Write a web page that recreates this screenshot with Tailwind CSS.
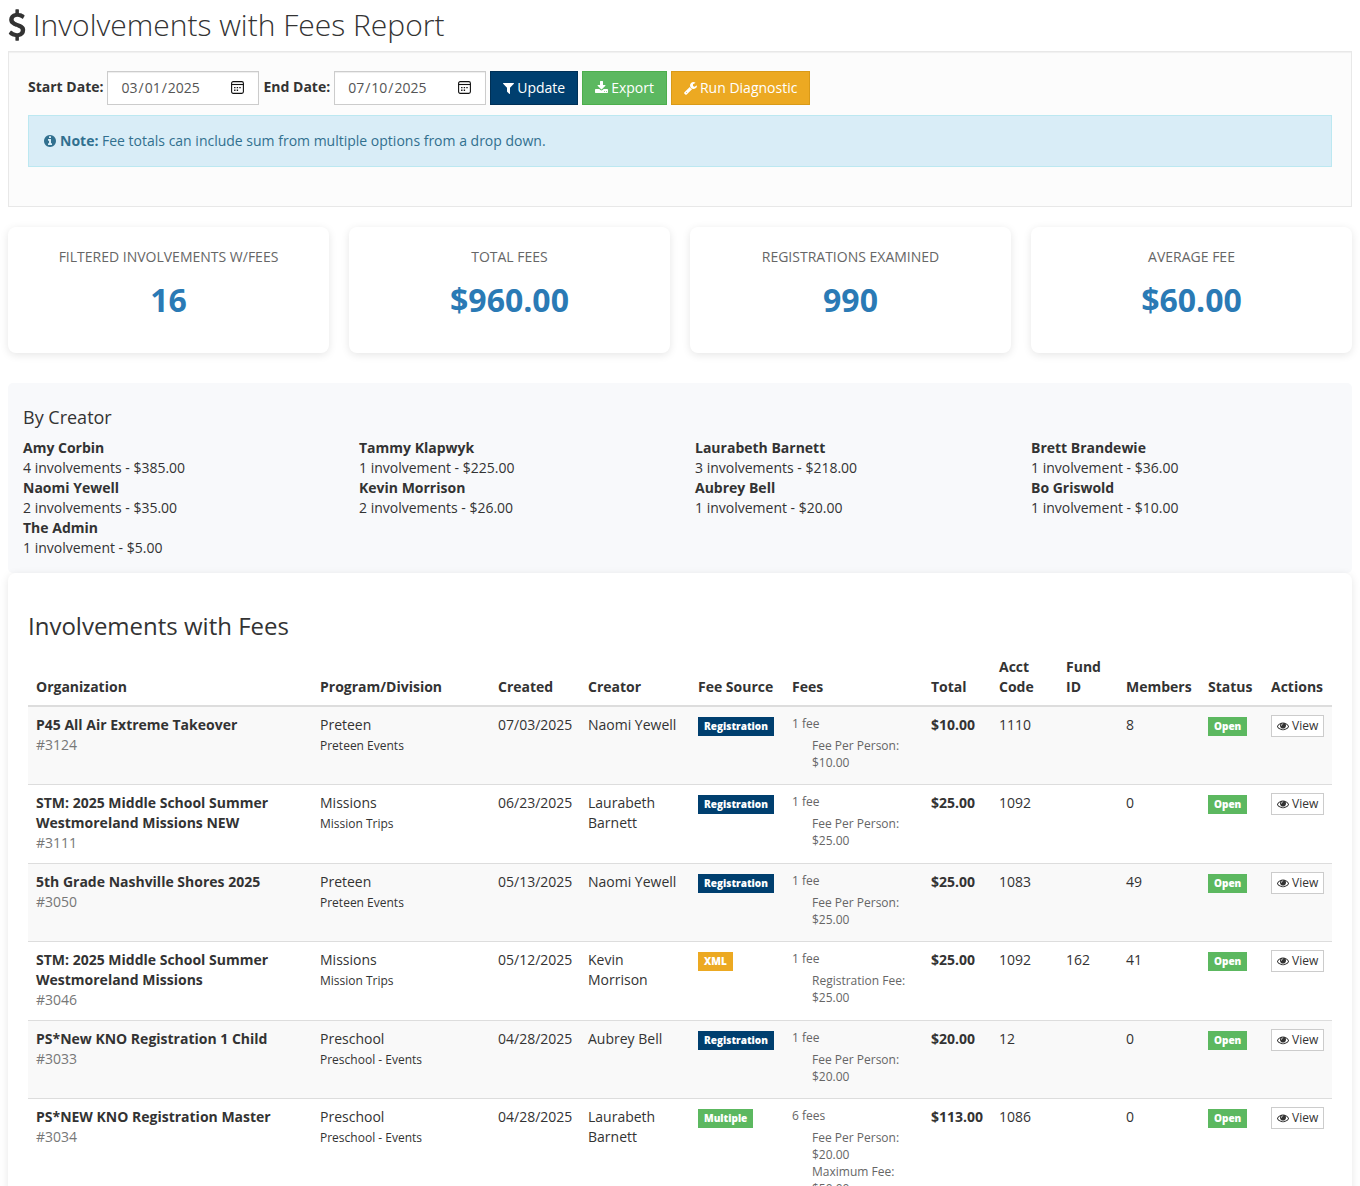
<!DOCTYPE html>
<html lang="en">
<head>
<meta charset="utf-8">
<meta name="viewport" content="width=device-width, initial-scale=1">
<title>Involvements with Fees Report</title>
<script src="https://cdn.jsdelivr.net/npm/@tailwindcss/browser@4"></script>
</head>
<body class="bg-white px-2 font-['Open_Sans',sans-serif] text-sm leading-5 text-[#333]">
<svg class="hidden" aria-hidden="true">
  <symbol id="eye" viewBox="0 0 1792 1792"><path d="M1664 960q-152-236-381-353 61 104 61 225 0 185-131.5 316.5t-316.5 131.5-316.5-131.5-131.5-316.5q0-121 61-225-229 117-381 353 133 205 333.5 326.5t434.5 121.5 434.5-121.5 333.5-326.5zm-720-384q0-20-14-34t-34-14q-125 0-214.5 89.5t-89.5 214.5q0 20 14 34t34 14 34-14 14-34q0-86 61-147t147-61q20 0 34-14t14-34zm848 384q0 34-20 69-140 230-376.5 368.5t-499.5 138.5-499.5-139-376.5-368q-20-35-20-69t20-69q140-229 376.5-368t499.5-139 499.5 139 376.5 368q20 35 20 69z"/></symbol>
  <symbol id="calendar" viewBox="0 0 13 13"><rect x=".6" y=".6" width="11.8" height="11.8" rx="1.6" fill="none" stroke="#111" stroke-width="1.1"/><path d="M.6 3.5h11.8" stroke="#111" stroke-width="1.1"/><path d="M5.7 6h1.4v1.3H5.7zM8.3 6h1.4v1.3H8.3zM3.1 6h1.4v1.3H3.1zM3.1 8.6h1.4v1.3H3.1zM5.7 8.6h1.4v1.3H5.7z" fill="#111"/></symbol>
</svg>

<h1 class="flex items-center gap-[7px] pt-[7px] pb-[9px] text-[30px] leading-[35px] font-light">
  <svg class="h-8 w-[18px]" viewBox="384 0 1024 1792" fill="currentColor" aria-hidden="true"><path d="M1362 1185q0 153-99.5 263.5t-258.5 136.5v175q0 14-9 23t-23 9h-135q-13 0-22.5-9.5t-9.5-22.5v-175q-66-9-127.5-31t-101.5-44.5-74-48-46.5-37.5-17.5-18q-17-21-2-41l103-135q7-10 23-12 15-2 24 9l2 2q113 99 243 125 37 8 74 8 81 0 142.5-43t61.5-122q0-28-15-53t-33.5-42-58.5-37.5-66-32-80-32.5q-39-16-61.5-25t-61.5-26.5-62.5-31-56.5-35.5-53.5-42.5-43.5-49-35.5-58-21-66.5-8.5-78q0-138 98-242t255-134v-180q0-13 9.5-22.5t22.5-9.5h135q14 0 23 9t9 23v176q57 6 110.5 23t87 33.5 63.5 37.5 39 29 15 14q17 18 5 38l-81 146q-8 15-23 16-14 3-27-7-3-3-14.5-12t-39-26.5-58.5-32-74.5-26-85.5-11.5q-95 0-155 43t-60 111q0 26 8.5 48t29.5 41.5 39.5 33 56 31 60.5 27 70 27.5q53 20 81 31.5t76 35 75.5 42.5 62 50 53 63.5 31.5 76.5 13 94z"/></svg>
  Involvements with Fees Report
</h1>

<form class="border border-[#e8e8e8] bg-[#fcfcfc] px-[19px] pt-[19px] pb-[39px] shadow-[inset_0_1px_1px_rgba(0,0,0,0.05)]">
  <div class="flex flex-wrap items-center gap-1">
    <label for="start" class="pb-0.5 font-bold">Start Date:</label>
    <div class="relative">
      <input id="start" type="date" value="2025-03-01" class="block h-[34px] w-[152px] border border-[#ccc] bg-white px-3 text-[#555] shadow-[inset_0_1px_1px_rgba(0,0,0,0.075)] [&::-webkit-calendar-picker-indicator]:opacity-0">
      <svg class="pointer-events-none absolute top-2.5 right-[15px] size-[13px]" aria-hidden="true"><use href="#calendar"/></svg>
    </div>
    <label for="end" class="pb-0.5 font-bold">End Date:</label>
    <div class="relative">
      <input id="end" type="date" value="2025-07-10" class="block h-[34px] w-[152px] border border-[#ccc] bg-white px-3 text-[#555] shadow-[inset_0_1px_1px_rgba(0,0,0,0.075)] [&::-webkit-calendar-picker-indicator]:opacity-0">
      <svg class="pointer-events-none absolute top-2.5 right-[15px] size-[13px]" aria-hidden="true"><use href="#calendar"/></svg>
    </div>
    <button type="button" class="flex h-[34px] items-center gap-[3px] border border-[#003056] bg-[#003f6f] px-3 text-white">
      <svg class="h-3.5 w-[11px]" viewBox="192 0 1408 1792" fill="currentColor" aria-hidden="true"><path d="M1595 295q17 41-14 70l-493 493v742q0 42-39 59-13 5-25 5-27 0-45-19l-256-256q-19-19-19-45v-486l-493-493q-31-29-14-70 17-39 59-39h1280q42 0 59 39z"/></svg>
      Update</button>
    <button type="button" class="flex h-[34px] items-center gap-[3px] border border-[#4cae4c] bg-[#5cb860] px-3 text-white">
      <svg class="h-3.5 w-[13px]" viewBox="64 0 1664 1792" fill="currentColor" aria-hidden="true"><path d="M1344 1344q0-26-19-45t-45-19-45 19-19 45 19 45 45 19 45-19 19-45zm256 0q0-26-19-45t-45-19-45 19-19 45 19 45 45 19 45-19 19-45zm128-224v320q0 40-28 68t-68 28h-1472q-40 0-68-28t-28-68v-320q0-40 28-68t68-28h465l135 136q58 56 136 56t136-56l136-136h464q40 0 68 28t28 68zm-325-569q17 41-14 70l-448 448q-18 19-45 19t-45-19l-448-448q-31-29-14-70 17-39 59-39h256v-448q0-26 19-45t45-19h256q26 0 45 19t19 45v448h256q42 0 59 39z"/></svg>
      Export</button>
    <button type="button" class="flex h-[34px] items-center gap-[3px] border border-[#d99a18] bg-[#eca922] px-3 text-white">
      <svg class="h-3.5 w-[13px]" viewBox="64 0 1664 1792" fill="currentColor" aria-hidden="true"><path d="M448 1472q0-26-19-45t-45-19-45 19-19 45 19 45 45 19 45-19 19-45zm644-420l-682 682q-37 37-90 37-52 0-91-37l-106-108q-38-36-38-90 0-53 38-91l681-681q39 98 114.5 173.5t173.5 114.5zm634-435q0 39-23 106-47 134-164.5 217.5t-258.5 83.5q-185 0-316.5-131.5t-131.5-316.5 131.5-316.5 316.5-131.5q58 0 121.5 16.5t107.5 46.5q16 11 16 28t-16 28l-293 169v224l193 107q5-3 79-48.5t135.5-81 70.5-35.5q15 0 23.5 10t8.5 25z"/></svg>
      Run Diagnostic</button>
  </div>
  <div class="mt-2.5 flex items-center gap-1 border border-[#bce8f1] bg-[#d9edf7] p-[15px] text-[#31708f]">
    <svg class="h-3.5 w-3" viewBox="128 0 1536 1792" fill="currentColor" aria-hidden="true"><path d="M1152 1376v-160q0-14-9-23t-23-9h-96v-512q0-14-9-23t-23-9h-320q-14 0-23 9t-9 23v160q0 14 9 23t23 9h96v320h-96q-14 0-23 9t-9 23v160q0 14 9 23t23 9h448q14 0 23-9t9-23zm-128-896v-160q0-14-9-23t-23-9h-192q-14 0-23 9t-9 23v160q0 14 9 23t23 9h192q14 0 23-9t9-23zm640 416q0 209-103 385.5t-279.5 279.5-385.5 103-385.5-103-279.5-279.5-103-385.5 103-385.5 279.5-279.5 385.5-103 385.5 103 279.5 279.5 103 385.5z"/></svg>
    <p><strong>Note:</strong> Fee totals can include sum from multiple options from a drop down.</p>
  </div>
</form>

<section class="mt-5 grid grid-cols-4 gap-5 text-center">
  <div class="rounded-lg bg-white px-5 pt-5 pb-[31px] shadow-[0_2px_8px_rgba(0,0,0,0.1)]"><h2 class="text-[#666]">FILTERED INVOLVEMENTS W/FEES</h2><p class="mt-2.5 text-[32px] leading-[45px] font-bold text-[#2a7ab5]">16</p></div>
  <div class="rounded-lg bg-white px-5 pt-5 pb-[31px] shadow-[0_2px_8px_rgba(0,0,0,0.1)]"><h2 class="text-[#666]">TOTAL FEES</h2><p class="mt-2.5 text-[32px] leading-[45px] font-bold text-[#2a7ab5]">$960.00</p></div>
  <div class="rounded-lg bg-white px-5 pt-5 pb-[31px] shadow-[0_2px_8px_rgba(0,0,0,0.1)]"><h2 class="text-[#666]">REGISTRATIONS EXAMINED</h2><p class="mt-2.5 text-[32px] leading-[45px] font-bold text-[#2a7ab5]">990</p></div>
  <div class="rounded-lg bg-white px-5 pt-5 pb-[31px] shadow-[0_2px_8px_rgba(0,0,0,0.1)]"><h2 class="text-[#666]">AVERAGE FEE</h2><p class="mt-2.5 text-[32px] leading-[45px] font-bold text-[#2a7ab5]">$60.00</p></div>
</section>

<section class="mt-[30px] rounded-[5px] bg-[#f8f9fb] pt-6 pb-[15px]">
  <h2 class="px-[15px] text-lg leading-5">By Creator</h2>
  <ul class="mt-[11px] grid grid-cols-4">
    <li class="px-[15px]"><strong class="block">Amy Corbin</strong>4 involvements - $385.00</li>
    <li class="px-[15px]"><strong class="block">Tammy Klapwyk</strong>1 involvement - $225.00</li>
    <li class="px-[15px]"><strong class="block">Laurabeth Barnett</strong>3 involvements - $218.00</li>
    <li class="px-[15px]"><strong class="block">Brett Brandewie</strong>1 involvement - $36.00</li>
    <li class="px-[15px]"><strong class="block">Naomi Yewell</strong>2 involvements - $35.00</li>
    <li class="px-[15px]"><strong class="block">Kevin Morrison</strong>2 involvements - $26.00</li>
    <li class="px-[15px]"><strong class="block">Aubrey Bell</strong>1 involvement - $20.00</li>
    <li class="px-[15px]"><strong class="block">Bo Griswold</strong>1 involvement - $10.00</li>
    <li class="px-[15px]"><strong class="block">The Admin</strong>1 involvement - $5.00</li>
  </ul>
</section>

<section class="rounded-lg bg-white px-5 pt-10 pb-5 shadow-[0_2px_8px_rgba(0,0,0,0.1)]">
  <h2 class="mb-2.5 text-2xl leading-[26px]">Involvements with Fees</h2>
  <table class="w-full table-fixed border-separate border-spacing-0 text-left">
    <colgroup>
      <col><col class="w-[178px]"><col class="w-[90px]"><col class="w-[110px]"><col class="w-[94px]"><col class="w-[139px]"><col class="w-[68px]"><col class="w-[67px]"><col class="w-[60px]"><col class="w-[82px]"><col class="w-[63px]"><col class="w-[69px]">
    </colgroup>
    <thead>
      <tr class="align-bottom *:border-b-2 *:border-[#ddd] *:p-2 *:font-bold">
        <th>Organization</th><th>Program/Division</th><th>Created</th><th>Creator</th><th class="whitespace-nowrap">Fee Source</th><th>Fees</th><th>Total</th><th>Acct Code</th><th>Fund ID</th><th>Members</th><th>Status</th><th>Actions</th>
      </tr>
    </thead>
    <tbody id="rows"></tbody>
  </table>
</section>

<script>
const badge = {
  Registration: 'bg-[#003f6f]',
  XML: 'bg-[#eca922]',
  Multiple: 'bg-[#5cb860]',
};
const rows = [
  ['P45 All Air Extreme Takeover', 3124, 'Preteen', 'Preteen Events', '07/03/2025', 'Naomi Yewell', 'Registration', [['Fee Per Person', '10.00']], '10.00', '1110', '', 8],
  ['STM: 2025 Middle School Summer Westmoreland Missions NEW', 3111, 'Missions', 'Mission Trips', '06/23/2025', 'Laurabeth Barnett', 'Registration', [['Fee Per Person', '25.00']], '25.00', '1092', '', 0],
  ['5th Grade Nashville Shores 2025', 3050, 'Preteen', 'Preteen Events', '05/13/2025', 'Naomi Yewell', 'Registration', [['Fee Per Person', '25.00']], '25.00', '1083', '', 49],
  ['STM: 2025 Middle School Summer Westmoreland Missions', 3046, 'Missions', 'Mission Trips', '05/12/2025', 'Kevin Morrison', 'XML', [['Registration Fee', '25.00']], '25.00', '1092', '162', 41],
  ['PS*New KNO Registration 1 Child', 3033, 'Preschool', 'Preschool - Events', '04/28/2025', 'Aubrey Bell', 'Registration', [['Fee Per Person', '20.00']], '20.00', '12', '', 0],
  ['PS*NEW KNO Registration Master', 3034, 'Preschool', 'Preschool - Events', '04/28/2025', 'Laurabeth Barnett', 'Multiple', [['Fee Per Person', '20.00'], ['Maximum Fee', '50.00']], '113.00', '1086', '', 0, 6],
];
document.getElementById('rows').innerHTML = rows.map(([org, id, prog, div, date, creator, src, fees, total, acct, fund, members, count = fees.length]) => `
  <tr class="h-[78px] first:h-[77px] align-top odd:bg-[#f9f9f9] even:h-[79px] not-first:*:border-t *:border-[#ddd] *:px-2 *:pt-2">
    <td><strong>${org}</strong><br><span class="text-[#777]">#${id}</span></td>
    <td>${prog}<br><span class="text-xs leading-5">${div}</span></td>
    <td class="whitespace-nowrap">${date}</td>
    <td>${creator}</td>
    <td><span class="mt-0.5 block w-fit px-1.5 text-[10px] leading-[19px] font-extrabold text-white ${badge[src]}">${src}</span></td>
    <td class="text-xs leading-[17px] text-[#666]">${count} fee${count > 1 ? 's' : ''}<ul class="mt-[5px] pl-5">${fees.map(([n, v]) => `<li>${n}:<br>$${v}</li>`).join('')}</ul></td>
    <td class="font-bold">$${total}</td>
    <td>${acct}</td>
    <td>${fund}</td>
    <td>${members}</td>
    <td><span class="mt-0.5 block w-fit bg-[#5cb860] px-1.5 text-[10px] leading-[19px] font-extrabold text-white">Open</span></td>
    <td><a href="#${id}" class="inline-flex h-[22px] items-center gap-[3px] border border-[#ccc] bg-white px-[5px] text-xs"><svg class="size-3" fill="currentColor" aria-hidden="true"><use href="#eye"/></svg>View</a></td>
  </tr>`).join('');
</script>
</body>
</html>
